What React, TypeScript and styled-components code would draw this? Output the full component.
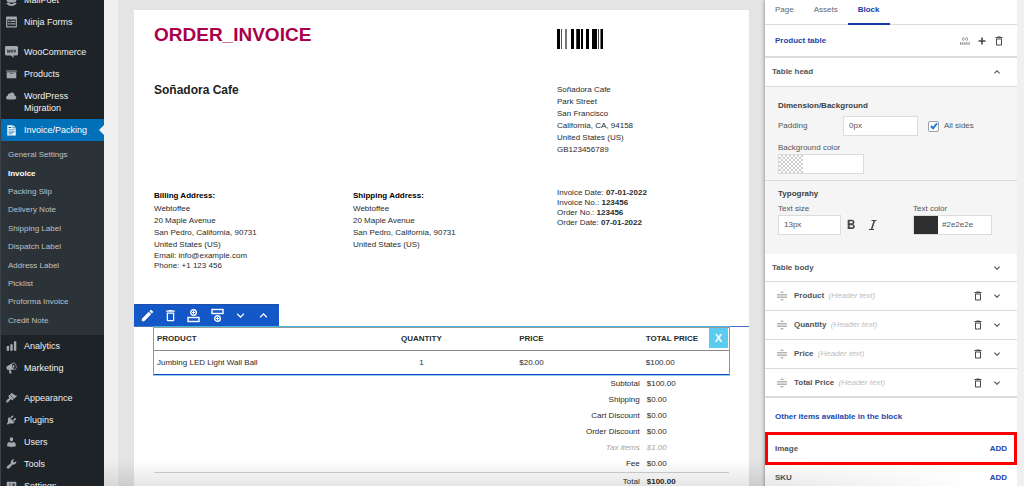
import React from "react";
import styled, { createGlobalStyle, css } from "styled-components";
import {
  MdEdit,
  MdDeleteOutline,
  MdKeyboardArrowDown,
  MdKeyboardArrowUp,
  MdFormatBold,
} from "react-icons/md";

const GlobalStyle = createGlobalStyle`
  *, *::before, *::after { box-sizing: border-box; }
  body { margin: 0; font-family: "Liberation Sans", Arial, sans-serif; font-size: 8px; line-height: 12px; color: #3c3f42; }
  h1, h2, h3, p, ul, address { margin: 0; padding: 0; font-style: normal; }
  ul { list-style: none; }
  button, input { font: inherit; color: inherit; margin: 0; }
  button { border: 0; padding: 0; background: none; cursor: pointer; }
  a { color: inherit; text-decoration: none; }
`;

/* ---------- frame ---------- */

const Frame = styled.div`
  display: grid;
  grid-template-columns: 104px minmax(0, 1fr) 252px;
  height: 100vh;
  overflow: hidden;
  position: relative;
  padding-right: 7px;
  background: #f0f0f1;
`;

const BottomShade = styled.div`
  position: absolute;
  left: 104px;
  right: 0;
  bottom: 0;
  height: 26px;
  pointer-events: none;
  background: linear-gradient(rgba(0, 0, 0, 0), rgba(0, 0, 0, 0.1));
  mask-image: linear-gradient(to right, #000 70%, transparent 95%);
`;

/* ---------- admin menu ---------- */

const Sidebar = styled.nav`
  background: #1d2327;
  border-left: 1px solid #3a4147;
  overflow: hidden;
`;

const MenuList = styled.ul`
  margin-top: -11px;
`;

const MenuItem = styled.li<{ $group?: boolean }>`
  margin-top: ${(p) => (p.$group ? "8px" : "0")};
`;

const MenuLink = styled.a<{ $active?: boolean }>`
  position: relative;
  display: flex;
  gap: 6px;
  padding: 5px 12px 5px 4px;
  font-size: 9px;
  line-height: 12px;
  color: #f0f0f1;
  ${(p) =>
    p.$active &&
    css`
      color: #fff;
      background: #0071b8;
      &::after {
        content: "";
        position: absolute;
        right: 0;
        top: 6px;
        border: 5px solid transparent;
        border-left-width: 0;
        border-right-color: #f0f0f1;
      }
    `}
`;

const MenuIcon = styled.svg<{ $active?: boolean }>`
  flex: none;
  width: 13px;
  height: 12px;
  fill: ${(p) => (p.$active ? "#fff" : "#a2a9af")};
`;

const SubMenu = styled.ul`
  display: grid;
  grid-auto-rows: 1fr;
  height: 194px;
  padding: 5px 0;
  background: #2c3338;
`;

const SubLink = styled.a<{ $current?: boolean }>`
  display: flex;
  align-items: center;
  height: 100%;
  padding-left: 7px;
  color: ${(p) => (p.$current ? "#fff" : "#bcc1c6")};
  font-weight: ${(p) => (p.$current ? 700 : 400)};
`;

type IconName =
  | "mail" | "form" | "woo" | "archive" | "cloud" | "document" | "bars"
  | "megaphone" | "brush" | "plug" | "user" | "wrench" | "sliders";

const iconPaths: Record<IconName, string> = {
  mail: "M2 2l3 9 3-6 2 5 2-5 3 6 3-9v9c0 2-1 3-3 3H5c-2 0-3-1-3-3zM1 15h5c2 2 6 2 8 0h5c-3 4-6 5-9 5s-6-1-9-5z",
  form: "M2 1h16c.55 0 1 .45 1 1v16c0 .55-.45 1-1 1H2c-.55 0-1-.45-1-1V2c0-.55.45-1 1-1zm15 16V6H3v11h14zM4 8v2h3V8H4zm4 0v2h8V8H8zm-4 4v2h3v-2H4zm4 0v2h8v-2H8z",
  woo: "M2 0h16c2 0 3 1 3 3v10c0 2-1 3-3 3h-5l1 4-5-4H2c-2 0-3-1-3-3V3c0-2 1-3 3-3z",
  archive: "M19 4v2H1V4h18zM2 7h16v10H2V7zm11 3V9H7v1h6z",
  cloud: "M14.9 9c1.8.2 3.1 1.7 3.1 3.5 0 1.9-1.6 3.5-3.5 3.5h-10C2.6 16 1 14.4 1 12.5 1 10.7 2.3 9.3 4.1 9 4 8.9 4 8.7 4 8.5 4 7.1 5.1 6 6.5 6c.3 0 .7.1.9.2C8.1 4.9 9.4 4 11 4c2.2 0 4 1.8 4 4 0 .4-.1.7-.1 1z",
  document: "M3 2h9v5h5v12H3V2zm10 0l4 4h-4V2zM5 5v1.5h5V5H5zm0 4v1.500h10V9H5zm0 3.500v1.500h10v-1.500H5zM5 16v1.200h7V16H5z",
  bars: "M18 18V2h-4v16h4zm-6 0V7H8v11h4zm-6 0v-8H2v8h4z",
  megaphone: "M18.150 5.940c.46 1.620.38 3.220-.02 4.480-.42 1.280-1.260 2.180-2.300 2.480-.16.06-.26.06-.4.06-.06.02-.12.02-.18.02-.06.02-.14.02-.22.02h-6.800l2.220 5.500c.02.14-.06.26-.14.34-.08.1-.24.16-.34.16H6.950c-.1 0-.26-.06-.34-.16-.08-.08-.16-.2-.14-.34l-1-5.500H4.250l-.02-.02c-.5.06-1.080-.18-1.540-.62s-.88-1.080-1.060-1.880c-.24-.8-.2-1.560-.02-2.200.18-.62.58-1.080 1.060-1.300l.02-.02 9-5.400c.1-.06.18-.1.24-.16.06-.04.14-.08.24-.12.16-.08.28-.12.5-.18 1.040-.3 2.240.1 3.220.98s1.840 2.240 2.260 3.860zm-2.580 5.980h-.02c.4-.1.74-.34 1.040-.7.58-.7.86-1.760.86-3.040 0-.64-.1-1.300-.28-1.980-.34-1.360-1.020-2.500-1.780-3.240s-1.680-1.100-2.460-.88c-.82.22-1.400.96-1.700 2-.32 1.040-.28 2.360.06 3.720.38 1.360 1 2.500 1.800 3.240.78.74 1.620 1.100 2.480.88zm-2.540-7.080c.22-.04.42-.02.62.04.38.16.76.48 1.020 1s.42 1.200.42 1.780c0 .3-.04.56-.12.8-.18.48-.44.84-.86.94-.34.1-.8-.06-1.140-.4s-.64-.86-.78-1.500c-.18-.62-.12-1.240.02-1.720s.48-.84.82-.94z",
  brush: "M14.480 11.060L7.410 3.990l1.500-1.500c.5-.56 2.300-.47 3.510.32 1.210.8 1.430 1.280 2.910 2.100 1.180.64 2.450 1.260 4.450.85zm-.71.71L6.700 4.700 4.930 6.470c-.39.39-.39 1.020 0 1.410l1.060 1.060c.39.39.39 1.030 0 1.420-.6.6-1.430 1.110-2.210 1.690-.35.26-.7.53-1.010.84C1.430 14.230.4 16.080 1.400 17.070c.99 1 2.840-.03 4.180-1.360.31-.31.58-.66.85-1.020.57-.78 1.080-1.610 1.690-2.210.39-.39 1.020-.39 1.410 0l1.060 1.060c.39.39 1.020.39 1.410 0z",
  plug: "M13.110 4.360L9.870 7.600 8 5.730l3.240-3.240c.35-.34 1.050-.2 1.560.32.52.51.66 1.210.31 1.550zm-8 1.770l.91-1.120 9.010 9.010-1.190.84c-.71.71-2.630 1.160-3.820 1.160H6.140L4.900 17.260c-.59.59-1.540.59-2.120 0-.59-.58-.59-1.530 0-2.120l1.240-1.240v-3.880c0-1.130.4-3.190 1.090-3.890zm7.260 3.970l3.240-3.240c.34-.35 1.040-.21 1.550.31.52.51.66 1.210.31 1.550l-3.240 3.250z",
  user: "M10 9.250c-2.270 0-2.730-3.440-2.730-3.440C7 4.020 7.820 2 9.970 2c2.160 0 2.980 2.020 2.710 3.810 0 0-.41 3.440-2.680 3.440zm0 2.570L12.720 10c2.390 0 4.520 2.330 4.520 4.530v2.490s-3.650 1.130-7.240 1.130c-3.650 0-7.240-1.130-7.240-1.130v-2.490c0-2.250 1.940-4.480 4.470-4.480z",
  wrench: "M16.680 9.770c-1.340 1.340-3.300 1.670-4.950.99l-5.410 6.520c-.99.99-2.590.99-3.580 0s-.99-2.590 0-3.570l6.520-5.420c-.68-1.650-.35-3.610.99-4.950 1.280-1.280 3.120-1.620 4.720-1.060l-2.890 2.890 2.820 2.820 2.860-2.870c.53 1.580.18 3.390-1.080 4.650z",
  sliders: "M18 16V4c0-.55-.45-1-1-1H3c-.55 0-1 .45-1 1v12c0 .55.45 1 1 1h14c.55 0 1-.45 1-1zM8 11h1c.55 0 1 .45 1 1s-.45 1-1 1H8v1.500c0 .28-.22.5-.5.5s-.5-.22-.5-.5V13H6c-.55 0-1-.45-1-1s.45-1 1-1h1V5.500c0-.28.22-.5.5-.5s.5.22.5.5V11zm5-2h-1c-.55 0-1-.45-1-1s.45-1 1-1h1V5.500c0-.28.22-.5.5-.5s.5.22.5.5V7h1c.55 0 1 .45 1 1s-.45 1-1 1h-1v5.500c0 .28-.22.5-.5.5s-.5-.22-.5-.5V9z",
};

type Item = { label: string; icon: IconName; group?: boolean; active?: boolean; children?: string[] };

const menu: Item[] = [
  { label: "MailPoet", icon: "mail" },
  { label: "Ninja Forms", icon: "form" },
  { label: "WooCommerce", icon: "woo", group: true },
  { label: "Products", icon: "archive" },
  { label: "WordPress Migration", icon: "cloud" },
  {
    label: "Invoice/Packing",
    icon: "document",
    active: true,
    children: [
      "General Settings", "Invoice", "Packing Slip", "Delivery Note", "Shipping Label",
      "Dispatch Label", "Address Label", "Picklist", "Proforma Invoice", "Credit Note",
    ],
  },
  { label: "Analytics", icon: "bars" },
  { label: "Marketing", icon: "megaphone" },
  { label: "Appearance", icon: "brush", group: true },
  { label: "Plugins", icon: "plug" },
  { label: "Users", icon: "user" },
  { label: "Tools", icon: "wrench" },
  { label: "Settings", icon: "sliders" },
];

function AdminMenu() {
  return (
    <Sidebar>
      <MenuList>
        {menu.map((item) => (
          <MenuItem key={item.label} $group={item.group}>
            <MenuLink href="#" $active={item.active}>
              <MenuIcon viewBox="0 0 20 20" $active={item.active} aria-hidden="true">
                <path d={iconPaths[item.icon]} fillRule="evenodd" />
                {item.icon === "woo" && (
                  <g fill="none" stroke="#2c3338" strokeWidth="1.4">
                    <path d="M3 6l1 5 2-4 1 4 1-5" />
                    <ellipse cx="11" cy="8.5" rx="1.3" ry="2.2" />
                    <ellipse cx="15.500" cy="8.5" rx="1.3" ry="2.2" />
                  </g>
                )}
              </MenuIcon>
              {item.label}
            </MenuLink>
            {item.children && (
              <SubMenu>
                {item.children.map((label) => (
                  <li key={label}>
                    <SubLink href="#" $current={label === "Invoice"}>{label}</SubLink>
                  </li>
                ))}
              </SubMenu>
            )}
          </MenuItem>
        ))}
      </MenuList>
    </Sidebar>
  );
}

/* ---------- invoice sheet ---------- */

const Canvas = styled.main`
  margin-left: 14px;
  padding: 10px 16px 0;
  background: #e4e4e4;
  overflow: hidden;
`;

const Sheet = styled.article`
  min-height: 100%;
  padding: 0 20px;
  background: #fff;
  color: #2b2b2b;
`;

const SheetRow = styled.section<{ $height: number }>`
  display: grid;
  grid-template-columns: 199fr 204fr 172fr;
  min-height: ${(p) => p.$height}px;
`;

const Title = styled.h1`
  grid-column: span 2;
  padding-top: 13px;
  font-size: 19px;
  line-height: 24px;
  color: #a9004b;
`;

const Barcode = styled.svg`
  display: block;
  width: 46px;
  height: 20px;
  margin-top: 19px;
`;

const Company = styled.h2`
  grid-column: span 2;
  font-size: 12px;
  line-height: 12px;
  color: #222;
`;

const Lines = styled.address`
  line-height: 12px;
`;

const TightLines = styled.div`
  line-height: 10px;
`;

const AddressTitle = styled.h3`
  padding: 2px 0 1px;
  font-size: 8px;
  line-height: 12px;
  color: #000;
`;

const Block = styled.section`
  margin: 0 -20px;
`;

const Toolbar = styled.div`
  display: flex;
  align-items: center;
  justify-content: space-between;
  width: 145px;
  height: 22px;
  padding: 0 5px 0 3px;
  background: #1458c8;
  border-top: 1px solid #1f4fa8;
`;

const ToolButton = styled.button`
  display: grid;
  place-items: center;
  width: 20px;
  height: 20px;
  color: #fff;
  svg { width: 15px; height: 15px; }
`;

const BlockBody = styled.div`
  border-top: 1px solid #4d6fc4;
  padding: 0 19px;
`;

const Selected = styled.div`
  position: relative;
  margin-top: -1px;
  border: 1px solid #3fb4dc;
  border-bottom-color: #8fd4ee;
`;

const CloseButton = styled.button`
  position: absolute;
  top: 1px;
  right: 1px;
  width: 19px;
  height: 20px;
  background: #5bcbef;
  color: #fff;
  font-size: 11px;
  font-weight: 700;
`;

const ItemTable = styled.table`
  width: 100%;
  table-layout: fixed;
  border-collapse: separate;
  border-spacing: 0;
  border-top: 1px solid #9a9a9a;
  border-bottom: 1px solid #1540c4;
`;

const Cell = styled.td<{ $center?: boolean; $width?: number }>`
  width: ${(p) => (p.$width ? `${p.$width}%` : "auto")};
  height: 23px;
  padding: 0 3px;
  text-align: ${(p) => (p.$center ? "center" : "left")};
  white-space: nowrap;
`;

const HeadCell = styled(Cell)`
  border-bottom: 1px solid #8a8a8a;
`;

const Summary = styled.table`
  width: 100%;
  table-layout: fixed;
  border-collapse: collapse;
`;

const SummaryRow = styled.tr<{ $muted?: boolean; $total?: boolean }>`
  height: ${(p) => (p.$total ? 20 : 16)}px;
  ${(p) => p.$muted && css`color: #a3a3a3; font-style: italic;`}
  ${(p) => p.$total && css`
    border-top: 1px solid #cfcfcf;
    td { font-weight: 700; }
  `}
`;

const SummaryLabel = styled.th`
  width: 85%;
  padding: 0 3px;
  text-align: right;
  font-weight: 400;
`;

const SummaryValue = styled.td`
  padding: 0 4px;
`;

const bars: [number, number, string?][] = [
  [0, 3], [4, 1, "#555"], [8, 2, "#777"], [14, 3], [19, 1, "#444"], [20, 3], [24, 2], [29, 3],
  [35, 5], [41, 1, "#444"], [43, 1, "#777"], [44, 2],
];

const summary: { label: string; value: string; muted?: boolean; total?: boolean }[] = [
  { label: "Subtotal", value: "$100.00" },
  { label: "Shipping", value: "$0.00" },
  { label: "Cart Discount", value: "$0.00" },
  { label: "Order Discount", value: "$0.00" },
  { label: "Tax items", value: "$1.00", muted: true },
  { label: "Fee", value: "$0.00" },
  { label: "Total", value: "$100.00", total: true },
];

function InsertIcon({ below }: { below?: boolean }) {
  return (
    <svg viewBox="0 0 15 15" fill="none" stroke="currentColor" aria-hidden="true">
      <g transform={below ? "matrix(1 0 0 -1 0 15)" : undefined}>
        <rect x="2" y="9.500" width="11" height="4" strokeWidth="1.4" />
        <circle cx="7.500" cy="4.500" r="2.800" strokeWidth="1.4" />
        <path d="M7.500 3v3M6 4.500h3" strokeWidth="1" />
      </g>
    </svg>
  );
}

function Invoice() {
  return (
    <Canvas>
      <Sheet>
        <SheetRow $height={74}>
          <Title>ORDER_INVOICE</Title>
          <Barcode viewBox="0 0 46 20" role="img" aria-label="Invoice barcode">
            {bars.map(([x, w, fill]) => (
              <rect key={x} x={x} width={w} height="20" fill={fill ?? "#000"} />
            ))}
          </Barcode>
        </SheetRow>
        <SheetRow $height={104}>
          <Company>Soñadora Cafe</Company>
          <Lines>
            Soñadora Cafe<br />Park Street<br />San Francisco<br />California, CA, 94158<br />
            United States (US)<br />GB123456789
          </Lines>
        </SheetRow>
        <SheetRow $height={116}>
          <div>
            <AddressTitle>Billing Address:</AddressTitle>
            <Lines>
              Webtoffee<br />20 Maple Avenue<br />San Pedro, California, 90731<br />United States (US)
            </Lines>
            <TightLines>
              Email: info@example.com<br />Phone: +1 123 456
            </TightLines>
          </div>
          <div>
            <AddressTitle>Shipping Address:</AddressTitle>
            <Lines>
              Webtoffee<br />20 Maple Avenue<br />San Pedro, California, 90731<br />United States (US)
            </Lines>
          </div>
          <TightLines>
            Invoice Date: <b>07-01-2022</b><br />
            Invoice No.: <b>123456</b><br />
            Order No.: <b>123456</b><br />
            Order Date: <b>07-01-2022</b>
          </TightLines>
        </SheetRow>
        <Block>
          <Toolbar role="toolbar" aria-label="Block tools">
            <ToolButton aria-label="Edit"><MdEdit /></ToolButton>
            <ToolButton aria-label="Delete"><MdDeleteOutline /></ToolButton>
            <ToolButton aria-label="Insert above"><InsertIcon /></ToolButton>
            <ToolButton aria-label="Insert below"><InsertIcon below /></ToolButton>
            <ToolButton aria-label="Move down"><MdKeyboardArrowDown /></ToolButton>
            <ToolButton aria-label="Move up"><MdKeyboardArrowUp /></ToolButton>
          </Toolbar>
          <BlockBody>
            <Selected>
              <ItemTable>
                <thead>
                  <tr>
                    <HeadCell as="th" $width={30}>PRODUCT</HeadCell>
                    <HeadCell as="th" $width={33} $center>QUANTITY</HeadCell>
                    <HeadCell as="th" $width={22}>PRICE</HeadCell>
                    <HeadCell as="th" $width={15}>TOTAL PRICE</HeadCell>
                  </tr>
                </thead>
                <tbody>
                  <tr>
                    <Cell>Jumbing LED Light Wall Ball</Cell>
                    <Cell $center>1</Cell>
                    <Cell>$20.00</Cell>
                    <Cell>$100.00</Cell>
                  </tr>
                </tbody>
              </ItemTable>
              <CloseButton aria-label="Close">X</CloseButton>
            </Selected>
          </BlockBody>
        </Block>
        <Summary>
          <tbody>
            {summary.map((row) => (
              <SummaryRow key={row.label} $muted={row.muted} $total={row.total}>
                <SummaryLabel scope="row">{row.label}</SummaryLabel>
                <SummaryValue>{row.value}</SummaryValue>
              </SummaryRow>
            ))}
          </tbody>
        </Summary>
      </Sheet>
    </Canvas>
  );
}

/* ---------- settings panel ---------- */

const Panel = styled.aside`
  position: relative;
  background: #fff;
  box-shadow: 0 0 4px rgba(0, 0, 0, 0.45);
  clip-path: inset(0 0 0 -8px);
  color: #50555a;
`;

const Tabs = styled.div`
  display: flex;
  height: 25px;
  border-bottom: 1px solid #dcdcdc;
`;

const Tab = styled.button<{ $active?: boolean }>`
  height: 25px;
  padding: 0 10px 4px;
  border-bottom: 2px solid ${(p) => (p.$active ? "#1b3ca6" : "transparent")};
  color: ${(p) => (p.$active ? "#1b3ca6" : "#63676b")};
  font-weight: ${(p) => (p.$active ? 700 : 400)};
`;

const PanelRow = styled.div<{
  $height: number;
  $left: number;
  $right: number;
  $heavy?: boolean;
  $marked?: boolean;
}>`
  display: flex;
  align-items: center;
  gap: 7px;
  height: ${(p) => p.$height}px;
  padding: 0 ${(p) => p.$right}px 0 ${(p) => p.$left}px;
  font-size: 8px;
  font-weight: 700;
  border-bottom: ${(p) => (p.$heavy ? 2 : 1)}px solid #dcdcdc;
  ${(p) => p.$marked && css`
    border: 3px solid #fa0000;
  `}
`;

const SectionTitle = styled.h2`
  height: 34px;
  padding: 13px 10px 0;
  font-size: 8px;
  line-height: 12px;
  color: #2145ad;
`;

const Grow = styled.span`
  flex: 1;
`;

const Accent = styled(Grow)`
  color: #2145ad;
`;

const Hint = styled.i`
  margin-left: 2px;
  font-weight: 400;
  color: #bdbdbd;
`;

const IconButton = styled.button`
  display: grid;
  place-items: center;
  width: 12px;
  height: 16px;
  color: #46494c;
  svg { width: 12px; height: 12px; }
`;

const HeadActions = styled.div`
  display: flex;
  gap: 5px;
`;

const AddButton = styled.button`
  font-weight: 700;
  color: #2145ad;
`;

const Grip = styled.svg`
  width: 10px;
  height: 10px;
  color: #b4b4b4;
`;

const Settings = styled.section<{ $height: number; $line?: boolean }>`
  min-height: ${(p) => p.$height}px;
  padding: 0 13px;
  background: #f5f5f5;
  border-bottom: ${(p) => (p.$line ? "1px solid #dcdcdc" : "0")};
`;

const SettingsTitle = styled.h3<{ $top: number }>`
  padding-top: ${(p) => p.$top}px;
  font-size: 8px;
  line-height: 12px;
  color: #3c3f42;
`;

const Line = styled.div<{ $top?: number }>`
  display: flex;
  align-items: center;
  padding-top: ${(p) => p.$top ?? 0}px;
`;

const InlineLabel = styled.label`
  width: 65px;
`;

const TextInput = styled.input<{ $width: number }>`
  width: ${(p) => p.$width}px;
  height: 20px;
  padding: 0 5px 1px;
  border: 1px solid #dcdcdc;
  background: #fff;
  outline: 0;
`;

const CheckLabel = styled.label`
  display: flex;
  align-items: center;
  gap: 5px;
  margin-left: 10px;
`;

const CheckBox = styled.input`
  appearance: none;
  width: 11px;
  height: 11px;
  border: 1px solid #9ea3a8;
  border-radius: 2px;
  background: #fff;
  position: relative;
  &:checked::after {
    content: "";
    position: absolute;
    left: 3px;
    top: 0;
    width: 4px;
    height: 7px;
    border: solid #1f7fd0;
    border-width: 0 2px 2px 0;
    transform: rotate(40deg);
  }
`;

const Field = styled.div`
  display: flex;
  flex-direction: column;
  label { line-height: 12px; }
`;

const ColorBox = styled.div<{ $width: number }>`
  display: flex;
  width: ${(p) => p.$width}px;
  height: 20px;
  border: 1px solid #dcdcdc;
  background: #fff;
  input { flex: 1; min-width: 0; padding: 0 4px 1px; border: 0; outline: 0; background: none; }
`;

const Swatch = styled.span<{ $color?: string }>`
  width: 24px;
  background: ${(p) =>
    p.$color ?? "repeating-conic-gradient(#cfcfcf 0 25%, #fff 0 50%) 0 0 / 4px 4px"};
`;

const StyleButtons = styled.div`
  display: flex;
  gap: 7px;
  align-self: flex-end;
  margin: 0 33px 2px 2px;
  button { width: 15px; }
  svg { width: 16px; height: 16px; }
`;

const columns = ["Product", "Quantity", "Price", "Total Price"];

function InsertLabelIcon() {
  return (
    <svg viewBox="0 0 12 12" fill="none" stroke="#8b8f93" aria-hidden="true">
      <path d="M4.500 2L3.500 4l1 2M7.500 2l1 2-1 2M5 4h2" />
      <path d="M1 8.500h10" strokeWidth="2.500" strokeDasharray="1.300 0.800" />
    </svg>
  );
}

function PlusIcon() {
  return (
    <svg viewBox="0 0 12 12" stroke="currentColor" strokeWidth="1.600" aria-hidden="true">
      <path d="M6 2.500v7M2.500 6h7" />
    </svg>
  );
}

function ItalicIcon() {
  return (
    <svg viewBox="0 0 16 16" fill="none" stroke="currentColor" aria-hidden="true">
      <path d="M6.500 3.500h5M4 12.500h5" strokeWidth="1.200" />
      <path d="M9.500 3.500l-3 9" strokeWidth="1.600" />
    </svg>
  );
}

function BlockPanel() {
  return (
    <Panel>
      <Tabs role="tablist">
        <Tab role="tab">Page</Tab>
        <Tab role="tab">Assets</Tab>
        <Tab role="tab" aria-selected="true" $active>Block</Tab>
      </Tabs>
      <PanelRow $height={33} $left={10} $right={12} $heavy>
        <Accent>Product table</Accent>
        <HeadActions>
          <IconButton aria-label="Insert label"><InsertLabelIcon /></IconButton>
          <IconButton aria-label="Add"><PlusIcon /></IconButton>
          <IconButton aria-label="Delete block"><MdDeleteOutline /></IconButton>
        </HeadActions>
      </PanelRow>
      <PanelRow $height={29} $left={7} $right={14}>
        <Grow>Table head</Grow>
        <IconButton aria-label="Collapse table head"><MdKeyboardArrowUp /></IconButton>
      </PanelRow>

      <Settings $height={94} $line>
        <SettingsTitle $top={13}>Dimension/Background</SettingsTitle>
        <Line $top={4}>
          <InlineLabel htmlFor="padding">Padding</InlineLabel>
          <TextInput id="padding" $width={75} defaultValue="0px" />
          <CheckLabel>
            <CheckBox type="checkbox" defaultChecked />
            All sides
          </CheckLabel>
        </Line>
        <Line $top={6}>
          <Field>
            <label htmlFor="background">Background color</label>
            <ColorBox $width={86}>
              <Swatch />
              <input id="background" type="text" />
            </ColorBox>
          </Field>
        </Line>
      </Settings>
      <Settings $height={73}>
        <SettingsTitle $top={7}>Typograhy</SettingsTitle>
        <Line $top={3}>
          <Field>
            <label htmlFor="size">Text size</label>
            <TextInput id="size" $width={63} defaultValue="13px" />
          </Field>
          <StyleButtons>
            <IconButton aria-label="Bold"><MdFormatBold /></IconButton>
            <IconButton aria-label="Italic"><ItalicIcon /></IconButton>
          </StyleButtons>
          <Field>
            <label htmlFor="color">Text color</label>
            <ColorBox $width={79}>
              <Swatch $color="#2e2e2e" />
              <input id="color" type="text" defaultValue="#2e2e2e" />
            </ColorBox>
          </Field>
        </Line>
      </Settings>

      <PanelRow $height={28} $left={7} $right={14}>
        <Grow>Table body</Grow>
        <IconButton aria-label="Expand table body"><MdKeyboardArrowDown /></IconButton>
      </PanelRow>
      {columns.map((name, i) => (
        <PanelRow key={name} $height={29} $left={12} $right={14} $heavy={i === columns.length - 1}>
          <Grip viewBox="0 0 10 10" fill="currentColor" aria-hidden="true">
            <path d="M5 0l2 2H3zM0 3h10v1.500H0zM0 5.500h10V7H0zM5 10l2-2H3z" />
          </Grip>
          <Grow>{name} <Hint>(Header text)</Hint></Grow>
          <IconButton aria-label={`Delete ${name}`}><MdDeleteOutline /></IconButton>
          <IconButton aria-label={`Expand ${name}`}><MdKeyboardArrowDown /></IconButton>
        </PanelRow>
      ))}
      <SectionTitle>Other items available in the block</SectionTitle>
      <PanelRow $height={33} $left={7} $right={7} $marked>
        <Grow>Image</Grow>
        <AddButton>ADD</AddButton>
      </PanelRow>
      <PanelRow $height={26} $left={10} $right={10}>
        <Grow>SKU</Grow>
        <AddButton>ADD</AddButton>
      </PanelRow>
    </Panel>
  );
}

export default function App() {
  return (
    <>
      <GlobalStyle />
      <Frame>
        <AdminMenu />
        <Invoice />
        <BlockPanel />
        <BottomShade />
      </Frame>
    </>
  );
}
